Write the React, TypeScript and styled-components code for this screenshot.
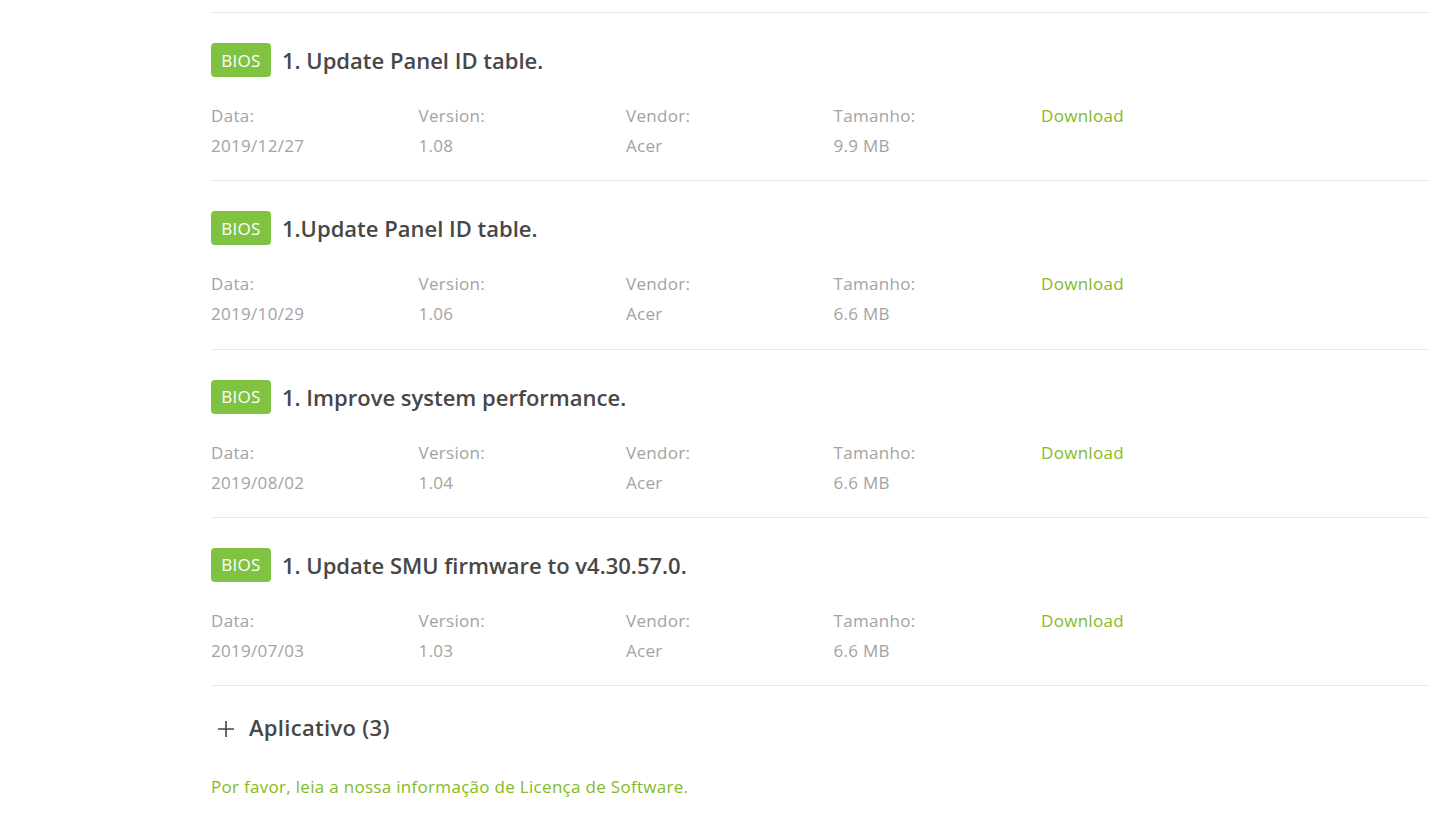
import React from "react";
import styled, { createGlobalStyle } from "styled-components";

const Global = createGlobalStyle`
  html, body { margin: 0; padding: 0; background: #fff; }
  body { font-family: "Open Sans", "Noto Sans", sans-serif; }
`;

const Page = styled.div`
  padding: 12px 0 0 211px;
  width: 1430px;
  box-sizing: border-box;
`;

const List = styled.div`
  border-top: 1px solid #e8e8e8;
`;

const Item = styled.div`
  padding: 30px 0 19.25px;
  border-bottom: 1px solid #e8e8e8;
`;

const Header = styled.div`
  display: flex;
  align-items: center;
  height: 34px;
  gap: 11px;
`;

const Badge = styled.span`
  display: inline-flex;
  align-items: center;
  justify-content: center;
  width: 60px;
  height: 34px;
  border-radius: 4px;
  background: #80c241;
  color: #fff;
  font-size: 17px;
  font-weight: 500;
  letter-spacing: 0.3px;
`;

const Title = styled.h3`
  margin: 0;
  font-size: 22px;
  font-weight: 600;
  color: #474747;
  letter-spacing: 0px;
`;

const Meta = styled.div`
  display: grid;
  grid-template-columns: repeat(5, 207.5px);
  margin-top: 24px;
  font-size: 17px;
  letter-spacing: 0.3px;
  line-height: 30px;
`;

const Cell = styled.div`
  display: flex;
  flex-direction: column;
`;

const Label = styled.span`
  color: #a3a3a3;
`;

const Value = styled.span`
  color: #a3a3a3;
`;

const DownloadLink = styled.a`
  color: #83bb1e;
  text-decoration: none;
  font-weight: 500;
`;

const Section = styled.div`
  display: flex;
  align-items: center;
  gap: 15px;
  height: 82px;
  padding-left: 7px;
`;

const SectionTitle = styled.h2`
  margin: 0;
  font-size: 22px;
  font-weight: 600;
  color: #474747;
  letter-spacing: 0.3px;
`;

const Plus = styled.svg`
  width: 16px;
  height: 16px;
  margin-top: 3px;
`;

const Footer = styled.a`
  display: block;
  margin-top: 7px;
  font-size: 17px;
  letter-spacing: 0.3px;
  color: #83bb1e;
  text-decoration: none;
`;

const items = [
  { title: "1. Update Panel ID table.", date: "2019/12/27", version: "1.08", size: "9.9 MB" },
  { title: "1.Update Panel ID table.", date: "2019/10/29", version: "1.06", size: "6.6 MB" },
  { title: "1. Improve system performance.", date: "2019/08/02", version: "1.04", size: "6.6 MB" },
  { title: "1. Update SMU firmware to v4.30.57.0.", date: "2019/07/03", version: "1.03", size: "6.6 MB" },
];

export default function App() {
  return (
    <>
      <Global />
      <Page>
        <List>
          {items.map((it) => (
            <Item key={it.date}>
              <Header>
                <Badge>BIOS</Badge>
                <Title>{it.title}</Title>
              </Header>
              <Meta>
                <Cell>
                  <Label>Data:</Label>
                  <Value>{it.date}</Value>
                </Cell>
                <Cell>
                  <Label>Version:</Label>
                  <Value>{it.version}</Value>
                </Cell>
                <Cell>
                  <Label>Vendor:</Label>
                  <Value>Acer</Value>
                </Cell>
                <Cell>
                  <Label>Tamanho:</Label>
                  <Value>{it.size}</Value>
                </Cell>
                <Cell>
                  <DownloadLink href="#">Download</DownloadLink>
                </Cell>
              </Meta>
            </Item>
          ))}
        </List>
        <Section>
          <Plus viewBox="0 0 16 16">
            <path d="M8 0v16M0 8h16" stroke="#444" strokeWidth="1.6" fill="none" />
          </Plus>
          <SectionTitle>Aplicativo (3)</SectionTitle>
        </Section>
        <Footer href="#">Por favor, leia a nossa informação de Licença de Software.</Footer>
      </Page>
    </>
  );
}
